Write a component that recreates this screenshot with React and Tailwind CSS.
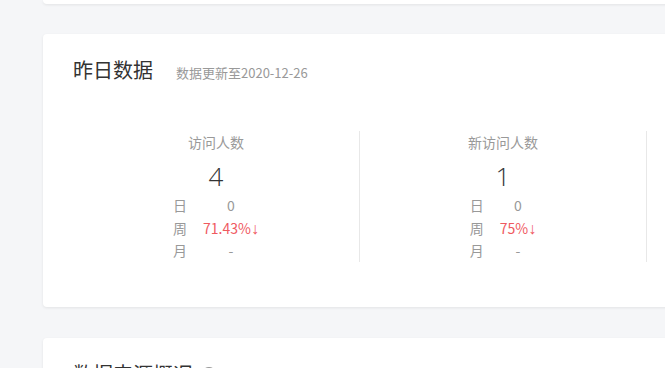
import React from 'react';

// yesterday's stats, one column per metric
const stats = [
    { label: '访问人数', value: '4', day: '0', week: '71.43%', month: '-' },
    { label: '新访问人数', value: '1', day: '0', week: '75%', month: '-' },
    { label: '浏览量', value: '12', day: '0', week: '60%', month: '-' },
    { label: '支付人数', value: '0', day: '0', week: '', month: '-' },
];

const StatColumn = ({ stat, last }) => (
    <div className={`w-[287px] shrink-0 h-[131px] flex flex-col items-center ${last ? '' : 'border-r border-[#e8e8e8]'}`}>
        <div className="text-[14px] leading-[22px] text-[#999]">{stat.label}</div>
        <div className="mt-[5px] text-[26px] leading-[36px] font-light font-['Open_Sans',sans-serif] text-[#333]">{stat.value}</div>
        <table className="text-[14px] leading-[22.5px]">
            <tbody>
                <tr>
                    <td className="text-[#999]">日</td>
                    <td className="pl-4 text-center text-[#999]">{stat.day}</td>
                </tr>
                <tr>
                    <td className="text-[#999]">周</td>
                    {stat.week ? (
                        <td className="pl-4 text-center text-[#ef5a5f]">
                            {stat.week}
                            <span className="text-[16px] leading-[16px] font-['Liberation_Sans',sans-serif]">↓</span>
                        </td>
                    ) : (
                        <td className="pl-4 text-center text-[#999]">-</td>
                    )}
                </tr>
                <tr>
                    <td className="text-[#999]">月</td>
                    <td className="pl-4 text-center text-[#999]">{stat.month}</td>
                </tr>
            </tbody>
        </table>
    </div>
);

const App = () => {
    return (
        <div className="w-[665px] h-[368px] overflow-hidden bg-[#f5f6f8] font-['Noto_Sans_CJK_SC',sans-serif]">
            <div className="pl-[43px] w-[1300px]">
                {/* previous card, only its bottom edge is visible */}
                <div className="h-[4px] w-[1208px] bg-white rounded-b-[4px] shadow-[0_1px_3px_rgba(0,0,0,0.08)]" />

                {/* 昨日数据 */}
                <div className="mt-[30px] w-[1208px] bg-white rounded-[4px] shadow-[0_1px_3px_rgba(0,0,0,0.08)] px-[30px] pt-[22px] pb-[45px]">
                    <div className="flex items-baseline">
                        <h2 className="text-[20px] leading-[28px] text-[#333]">昨日数据</h2>
                        <span className="ml-[23px] text-[13px] text-[#999]">数据更新至2020-12-26</span>
                    </div>
                    <div className="mt-[47px] flex">
                        {stats.map((s, i) => (
                            <StatColumn key={s.label} stat={s} last={i === stats.length - 1} />
                        ))}
                    </div>
                </div>

                {/* 数据来源概况 */}
                <div className="mt-[31px] w-[1208px] h-[300px] bg-white rounded-[4px] shadow-[0_1px_3px_rgba(0,0,0,0.08)] px-[30px] pt-[22px]">
                    <div className="flex items-center">
                        <h2 className="text-[20px] leading-[28px] text-[#333]">数据来源概况</h2>
                        <svg className="ml-2" width="16" height="16" viewBox="0 0 16 16" fill="none" stroke="#999" strokeWidth="1.2">
                            <circle cx="8" cy="8" r="6.5" />
                            <path d="M6.2 6.2a1.8 1.8 0 1 1 2.6 1.6c-.5.3-.8.6-.8 1.2v.5" />
                            <circle cx="8" cy="11.3" r="0.5" fill="#999" />
                        </svg>
                    </div>
                </div>
            </div>
        </div>
    );
};

export default App;
